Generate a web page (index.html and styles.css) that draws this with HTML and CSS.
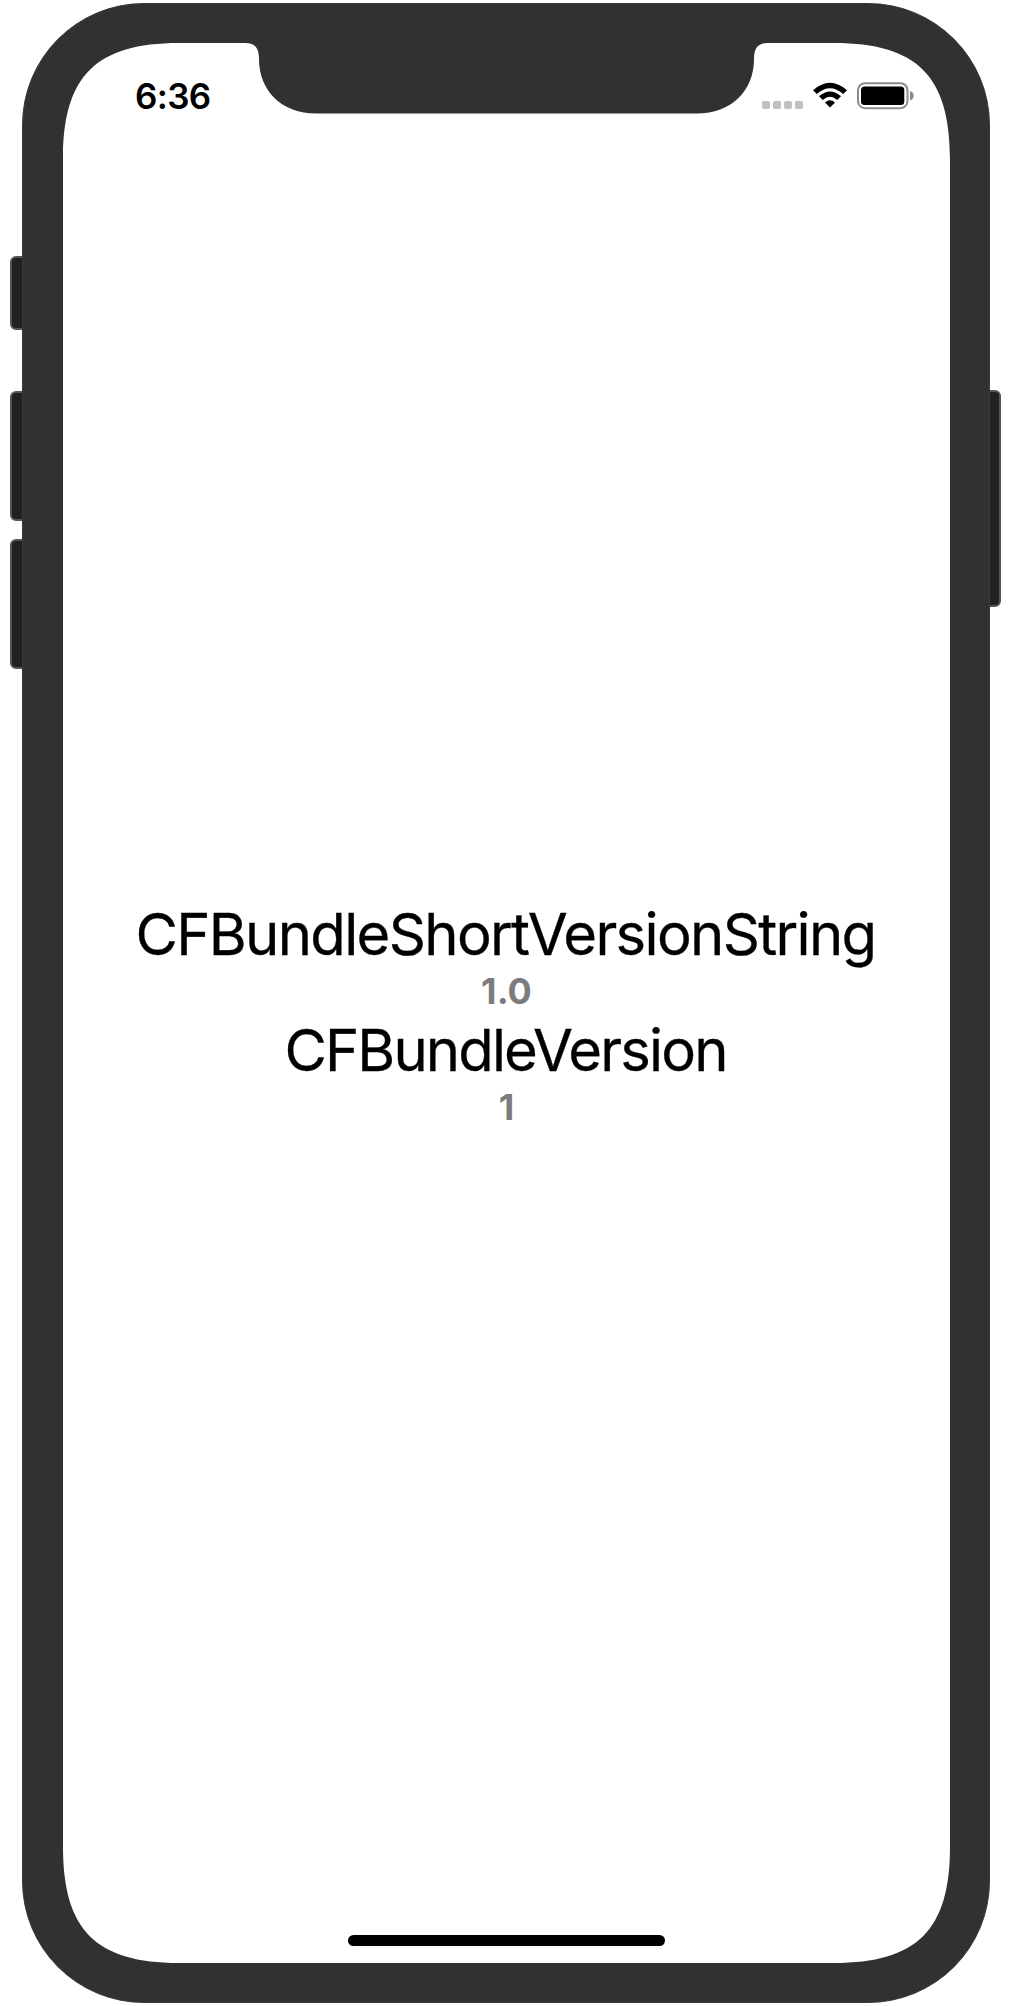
FILE: index.html
```html
<!DOCTYPE html>
<html lang="en">
<head>
<meta charset="utf-8">
<title>Bundle version</title>
<link rel="stylesheet" href="styles.css">
</head>
<body>
<div class="phone">
  <span class="button mute"></span>
  <span class="button volume-up"></span>
  <span class="button volume-down"></span>
  <span class="button power"></span>
  <div class="bezel">
    <div class="screen">
      <header class="status">
        <time class="clock">6:36</time>
        <div class="indicators">
          <div class="signal"><i></i><i></i><i></i><i></i></div>
          <svg class="wifi" width="36" height="27" viewBox="0 0 36 27">
            <path d="M1 8.2Q18-6.8 35 8.2L31.2 12Q18 .4 4.8 12ZM7 14.2Q18 4.6 29 14.2L25.2 18Q18 11.7 10.8 18ZM13 20.4Q18 16 23 20.4L18 25.6Z"/>
          </svg>
          <svg class="battery" width="57" height="28" viewBox="0 0 57 28">
            <rect x="1" y="1.2" width="49.5" height="25" rx="7" fill="none" stroke="#8c8c8c" stroke-width="2"/>
            <rect x="4" y="4.5" width="43.3" height="18.5" rx="3.5"/>
            <path d="M53 9Q56.7 10 56.7 13.7T53 18.5Z" fill="#8c8c8c"/>
          </svg>
        </div>
      </header>
      <main class="content">
        <section class="entry">
          <h1 class="key key-short">CFBundleShortVersionString</h1>
          <p class="value">1.0</p>
        </section>
        <section class="entry">
          <h1 class="key">CFBundleVersion</h1>
          <p class="value">1</p>
        </section>
      </main>
      <div class="home-bar"></div>
    </div>
  </div>
</div>
</body>
</html>
```
FILE: styles.css
```css
* { box-sizing: border-box; }
body {
  margin: 0;
  background: #fff;
  color: #000;
  font-family: Inter, "Liberation Sans", sans-serif;
}
.phone {
  position: relative;
  width: 1012px;
  height: 2006px;
  padding: 3px 22px;
}
.bezel {
  position: relative;
  width: 968px;
  height: 2000px;
  padding: 39px 39px 39px 40px;
  border: 1px solid #3c3a3b;
  border-radius: 122px;
  background: #313131;
}
.button {
  position: absolute;
  left: 10px;
  width: 20px;
  border: 2px solid #555;
  border-radius: 6px;
  background: #212121;
}
.mute { top: 256px; height: 74px; }
.volume-up { top: 391px; height: 130px; }
.volume-down { top: 539px; height: 130px; }
.power { left: 980px; width: 21px; top: 390px; height: 217px; }
.screen {
  display: flex;
  flex-direction: column;
  align-items: center;
  width: 887px;
  height: 1920px;
  background: #fff;
  clip-path: path("M0 116C0 33 33 0 116 0H182C192 0 196 5 196 16C196 48 219 70.5 253 70.5H634C668 70.5 691 48 691 16C691 5 695 0 705 0H771C854 0 887 33 887 116V1804C887 1887 854 1920 771 1920H116C33 1920 0 1887 0 1804Z");
}
.status {
  display: flex;
  justify-content: space-between;
  align-items: flex-start;
  width: 100%;
  height: 100px;
  padding: 31px 36px 0 72px;
}
.clock {
  font-size: 35px;
  font-weight: 600;
  line-height: 44px;
  letter-spacing: -0.7px;
}
.indicators {
  display: flex;
  padding-top: 8px;
}
.signal {
  display: flex;
  gap: 2.7px;
  padding-top: 18.5px;
  margin-right: 9px;
}
.signal i {
  width: 8px;
  height: 8px;
  border-radius: 2px;
  background: #c0c0c0;
}
.battery { margin-left: 9.5px; }
.content {
  display: flex;
  flex-direction: column;
  align-items: center;
  gap: 2px;
  flex: 1;
  padding-top: 757.5px;
}
.entry { text-align: center; }
.key {
  margin: 0;
  padding-right: 2px;
  font-size: 58px;
  font-weight: 400;
  line-height: 67px;
  letter-spacing: -1.85px;
  -webkit-text-stroke: 0.3px #000;
}
.key-short { letter-spacing: -1.66px; }
.value {
  margin: 0;
  font-size: 36px;
  font-weight: 700;
  line-height: 47px;
  color: #7c7c80;
}
.home-bar {
  width: 317px;
  height: 11px;
  margin-bottom: 17px;
  border-radius: 6px;
  background: #000;
}
```
